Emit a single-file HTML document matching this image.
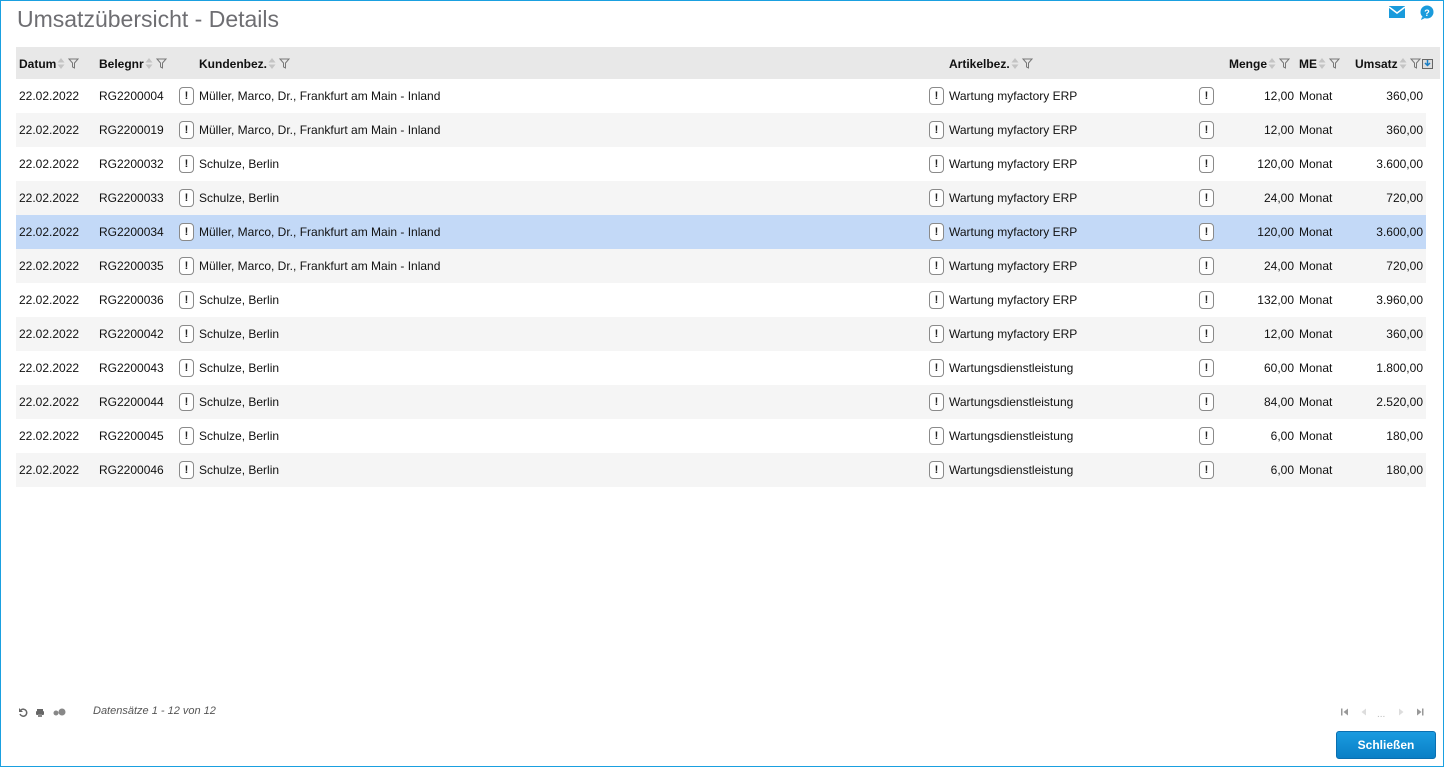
<!DOCTYPE html>
<html><head><meta charset="utf-8"><style>
*{margin:0;padding:0;box-sizing:border-box}
body{width:1444px;height:767px;position:relative;background:#fff;font-family:"Liberation Sans",Arial,sans-serif;font-size:12px;color:#111;overflow:hidden}
.frame{position:absolute;left:0;top:0;width:1444px;height:767px;border:1px solid #1aa0e0}
h1{position:absolute;left:17px;top:6px;font-size:23px;font-weight:normal;color:#6e6e72}
.hdr{position:absolute;left:16px;top:47px;width:1424px;height:32px;background:#e8e8e8;font-weight:bold}
.row{position:absolute;left:16px;width:1410px;height:34px}
.row.g{background:#f5f5f5}.row.s{background:#c3d9f7}
.c{position:absolute;top:10px;white-space:nowrap}
.r{text-align:right}
.ex{position:absolute;top:8px;width:15px;height:18px;border:1px solid #8a8a8a;border-radius:4px;background:#fff;font-weight:bold;font-size:11px;text-align:center;line-height:16px;color:#222}
.si{display:inline-block;vertical-align:-1px;margin-left:1px}
.btn{position:absolute;left:1336px;top:731px;width:100px;height:28px;background:linear-gradient(#1a9be0,#0a7fc6);border:1px solid #0a6fb0;border-radius:3px;color:#fff;font-weight:bold;font-size:12px;text-align:center;line-height:26px}
</style></head><body>
<div class="frame"></div>
<h1>Umsatzübersicht - Details</h1>
<svg style="position:absolute;left:1389px;top:6px" width="16" height="12"><rect width="16" height="12" fill="#1a9bdc"/><path d="M0 1 L8 7 L16 1" stroke="#fff" stroke-width="1.5" fill="none"/></svg>
<svg style="position:absolute;left:1419px;top:5px" width="16" height="16"><circle cx="8" cy="7" r="6.5" fill="#1a9bdc"/><path d="M3 12 L2 15 L6 13Z" fill="#1a9bdc"/><text x="8" y="11" font-size="9" font-weight="bold" fill="#fff" text-anchor="middle" font-family="Liberation Sans">?</text></svg>
<div class="hdr">
<span class="c" style="left:3px">Datum<svg class="si" width="22" height="11"><path d="M4 0L0.5 4.5H7.5ZM4 11L0.5 6.5H7.5Z" fill="#c4c4c4"/><path d="M12 1H21L17.5 5V10L15.5 9V5Z" fill="none" stroke="#777"/></svg></span>
<span class="c" style="left:83px">Belegnr<svg class="si" width="22" height="11"><path d="M4 0L0.5 4.5H7.5ZM4 11L0.5 6.5H7.5Z" fill="#c4c4c4"/><path d="M12 1H21L17.5 5V10L15.5 9V5Z" fill="none" stroke="#777"/></svg></span>
<span class="c" style="left:183px">Kundenbez.<svg class="si" width="22" height="11"><path d="M4 0L0.5 4.5H7.5ZM4 11L0.5 6.5H7.5Z" fill="#c4c4c4"/><path d="M12 1H21L17.5 5V10L15.5 9V5Z" fill="none" stroke="#777"/></svg></span>
<span class="c" style="left:933px">Artikelbez.<svg class="si" width="22" height="11"><path d="M4 0L0.5 4.5H7.5ZM4 11L0.5 6.5H7.5Z" fill="#c4c4c4"/><path d="M12 1H21L17.5 5V10L15.5 9V5Z" fill="none" stroke="#777"/></svg></span>
<span class="c" style="left:1213px">Menge<svg class="si" width="22" height="11"><path d="M4 0L0.5 4.5H7.5ZM4 11L0.5 6.5H7.5Z" fill="#c4c4c4"/><path d="M12 1H21L17.5 5V10L15.5 9V5Z" fill="none" stroke="#777"/></svg></span>
<span class="c" style="left:1283px">ME<svg class="si" width="22" height="11"><path d="M4 0L0.5 4.5H7.5ZM4 11L0.5 6.5H7.5Z" fill="#c4c4c4"/><path d="M12 1H21L17.5 5V10L15.5 9V5Z" fill="none" stroke="#777"/></svg></span>
<span class="c" style="left:1339px">Umsatz<svg class="si" width="22" height="11"><path d="M4 0L0.5 4.5H7.5ZM4 11L0.5 6.5H7.5Z" fill="#c4c4c4"/><path d="M12 1H21L17.5 5V10L15.5 9V5Z" fill="none" stroke="#777"/></svg><svg class="si" width="11" height="10"><rect x="0.5" y="0.5" width="10" height="9" fill="#ddd" stroke="#666"/><path d="M5.5 1V6M3 4L5.5 6.5L8 4" stroke="#1a7fc6" stroke-width="1.5" fill="none"/></svg></span>
</div>

<div class="row" style="top:79px"><span class="c" style="left:3px">22.02.2022</span><span class="c" style="left:83px">RG2200004</span><span class="ex" style="left:163px">!</span><span class="c" style="left:183px">Müller, Marco, Dr., Frankfurt am Main - Inland</span><span class="ex" style="left:913px">!</span><span class="c" style="left:933px">Wartung myfactory ERP</span><span class="ex" style="left:1183px">!</span><span class="c r" style="right:132px">12,00</span><span class="c" style="left:1283px">Monat</span><span class="c r" style="right:3px">360,00</span></div>
<div class="row g" style="top:113px"><span class="c" style="left:3px">22.02.2022</span><span class="c" style="left:83px">RG2200019</span><span class="ex" style="left:163px">!</span><span class="c" style="left:183px">Müller, Marco, Dr., Frankfurt am Main - Inland</span><span class="ex" style="left:913px">!</span><span class="c" style="left:933px">Wartung myfactory ERP</span><span class="ex" style="left:1183px">!</span><span class="c r" style="right:132px">12,00</span><span class="c" style="left:1283px">Monat</span><span class="c r" style="right:3px">360,00</span></div>
<div class="row" style="top:147px"><span class="c" style="left:3px">22.02.2022</span><span class="c" style="left:83px">RG2200032</span><span class="ex" style="left:163px">!</span><span class="c" style="left:183px">Schulze, Berlin</span><span class="ex" style="left:913px">!</span><span class="c" style="left:933px">Wartung myfactory ERP</span><span class="ex" style="left:1183px">!</span><span class="c r" style="right:132px">120,00</span><span class="c" style="left:1283px">Monat</span><span class="c r" style="right:3px">3.600,00</span></div>
<div class="row g" style="top:181px"><span class="c" style="left:3px">22.02.2022</span><span class="c" style="left:83px">RG2200033</span><span class="ex" style="left:163px">!</span><span class="c" style="left:183px">Schulze, Berlin</span><span class="ex" style="left:913px">!</span><span class="c" style="left:933px">Wartung myfactory ERP</span><span class="ex" style="left:1183px">!</span><span class="c r" style="right:132px">24,00</span><span class="c" style="left:1283px">Monat</span><span class="c r" style="right:3px">720,00</span></div>
<div class="row s" style="top:215px"><span class="c" style="left:3px">22.02.2022</span><span class="c" style="left:83px">RG2200034</span><span class="ex" style="left:163px">!</span><span class="c" style="left:183px">Müller, Marco, Dr., Frankfurt am Main - Inland</span><span class="ex" style="left:913px">!</span><span class="c" style="left:933px">Wartung myfactory ERP</span><span class="ex" style="left:1183px">!</span><span class="c r" style="right:132px">120,00</span><span class="c" style="left:1283px">Monat</span><span class="c r" style="right:3px">3.600,00</span></div>
<div class="row g" style="top:249px"><span class="c" style="left:3px">22.02.2022</span><span class="c" style="left:83px">RG2200035</span><span class="ex" style="left:163px">!</span><span class="c" style="left:183px">Müller, Marco, Dr., Frankfurt am Main - Inland</span><span class="ex" style="left:913px">!</span><span class="c" style="left:933px">Wartung myfactory ERP</span><span class="ex" style="left:1183px">!</span><span class="c r" style="right:132px">24,00</span><span class="c" style="left:1283px">Monat</span><span class="c r" style="right:3px">720,00</span></div>
<div class="row" style="top:283px"><span class="c" style="left:3px">22.02.2022</span><span class="c" style="left:83px">RG2200036</span><span class="ex" style="left:163px">!</span><span class="c" style="left:183px">Schulze, Berlin</span><span class="ex" style="left:913px">!</span><span class="c" style="left:933px">Wartung myfactory ERP</span><span class="ex" style="left:1183px">!</span><span class="c r" style="right:132px">132,00</span><span class="c" style="left:1283px">Monat</span><span class="c r" style="right:3px">3.960,00</span></div>
<div class="row g" style="top:317px"><span class="c" style="left:3px">22.02.2022</span><span class="c" style="left:83px">RG2200042</span><span class="ex" style="left:163px">!</span><span class="c" style="left:183px">Schulze, Berlin</span><span class="ex" style="left:913px">!</span><span class="c" style="left:933px">Wartung myfactory ERP</span><span class="ex" style="left:1183px">!</span><span class="c r" style="right:132px">12,00</span><span class="c" style="left:1283px">Monat</span><span class="c r" style="right:3px">360,00</span></div>
<div class="row" style="top:351px"><span class="c" style="left:3px">22.02.2022</span><span class="c" style="left:83px">RG2200043</span><span class="ex" style="left:163px">!</span><span class="c" style="left:183px">Schulze, Berlin</span><span class="ex" style="left:913px">!</span><span class="c" style="left:933px">Wartungsdienstleistung</span><span class="ex" style="left:1183px">!</span><span class="c r" style="right:132px">60,00</span><span class="c" style="left:1283px">Monat</span><span class="c r" style="right:3px">1.800,00</span></div>
<div class="row g" style="top:385px"><span class="c" style="left:3px">22.02.2022</span><span class="c" style="left:83px">RG2200044</span><span class="ex" style="left:163px">!</span><span class="c" style="left:183px">Schulze, Berlin</span><span class="ex" style="left:913px">!</span><span class="c" style="left:933px">Wartungsdienstleistung</span><span class="ex" style="left:1183px">!</span><span class="c r" style="right:132px">84,00</span><span class="c" style="left:1283px">Monat</span><span class="c r" style="right:3px">2.520,00</span></div>
<div class="row" style="top:419px"><span class="c" style="left:3px">22.02.2022</span><span class="c" style="left:83px">RG2200045</span><span class="ex" style="left:163px">!</span><span class="c" style="left:183px">Schulze, Berlin</span><span class="ex" style="left:913px">!</span><span class="c" style="left:933px">Wartungsdienstleistung</span><span class="ex" style="left:1183px">!</span><span class="c r" style="right:132px">6,00</span><span class="c" style="left:1283px">Monat</span><span class="c r" style="right:3px">180,00</span></div>
<div class="row g" style="top:453px"><span class="c" style="left:3px">22.02.2022</span><span class="c" style="left:83px">RG2200046</span><span class="ex" style="left:163px">!</span><span class="c" style="left:183px">Schulze, Berlin</span><span class="ex" style="left:913px">!</span><span class="c" style="left:933px">Wartungsdienstleistung</span><span class="ex" style="left:1183px">!</span><span class="c r" style="right:132px">6,00</span><span class="c" style="left:1283px">Monat</span><span class="c r" style="right:3px">180,00</span></div>

<svg style="position:absolute;left:18px;top:707px" width="52" height="11">
<path d="M3 3A3.5 3.5 0 1 1 2 7" stroke="#666" stroke-width="1.5" fill="none"/><path d="M1 1V5H5Z" fill="#666"/>
<rect x="19" y="2" width="6" height="3" fill="#666"/><rect x="18" y="4" width="8" height="4" rx="1" fill="#666"/><rect x="20" y="7" width="4" height="3" fill="#888"/>
<circle cx="38" cy="6" r="2.5" fill="#888"/><circle cx="44" cy="5" r="3.5" fill="#888"/>
</svg>
<div style="position:absolute;left:93px;top:705px;font-style:italic;font-size:11px;color:#555">Datensätze 1 - 12 von 12</div>
<svg style="position:absolute;left:1340px;top:707px" width="85" height="11">
<rect x="1" y="1.5" width="1.5" height="7" fill="#999"/><path d="M8 1.5L3.5 5L8 8.5Z" fill="#999"/>
<path d="M26 1.5L21.5 5L26 8.5Z" fill="#ddd"/>
<text x="37" y="10" font-size="10" fill="#bbb" font-family="Liberation Sans">...</text>
<path d="M59 1.5L63.5 5L59 8.5Z" fill="#ddd"/>
<path d="M77 1.5L81.5 5L77 8.5Z" fill="#999"/><rect x="82" y="1.5" width="1.5" height="7" fill="#999"/>
</svg>
<div class="btn">Schließen</div>
</body></html>
